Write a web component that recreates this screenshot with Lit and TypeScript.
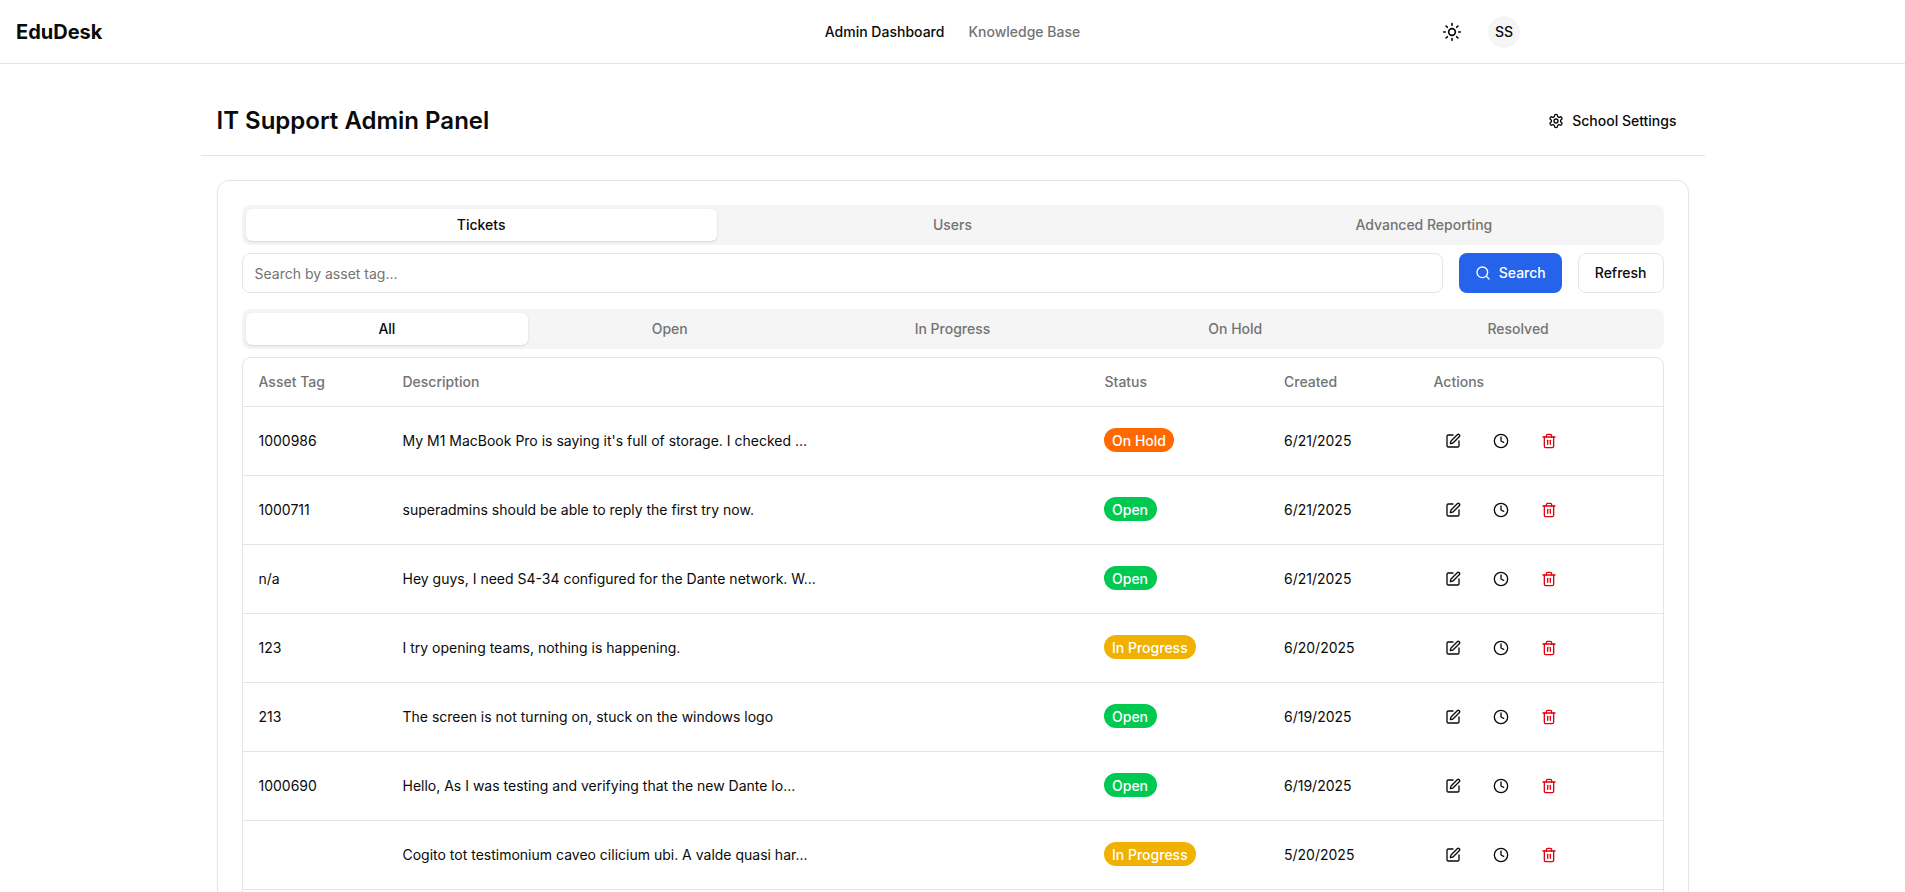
import { LitElement, html, css, svg } from "lit";
import { customElement } from "lit/decorators.js";

const icon = (cls: string, body: unknown) => html`<svg class="icon ${cls}" viewBox="0 0 24 24" fill="none" stroke="currentColor" stroke-width="2" stroke-linecap="round" stroke-linejoin="round">${body}</svg>`;
const sun = svg`<circle cx="12" cy="12" r="4"/><path d="M12 2v2"/><path d="M12 20v2"/><path d="m4.93 4.93 1.41 1.41"/><path d="m17.66 17.66 1.41 1.41"/><path d="M2 12h2"/><path d="M20 12h2"/><path d="m6.34 17.66-1.41 1.41"/><path d="m19.07 4.93-1.41 1.41"/>`;
const gear = svg`<path d="M12.22 2h-.44a2 2 0 0 0-2 2v.18a2 2 0 0 1-1 1.73l-.43.25a2 2 0 0 1-2 0l-.15-.08a2 2 0 0 0-2.73.73l-.22.38a2 2 0 0 0 .73 2.73l.15.1a2 2 0 0 1 1 1.72v.51a2 2 0 0 1-1 1.74l-.15.09a2 2 0 0 0-.73 2.73l.22.38a2 2 0 0 0 2.73.73l.15-.08a2 2 0 0 1 2 0l.43.25a2 2 0 0 1 1 1.73V20a2 2 0 0 0 2 2h.44a2 2 0 0 0 2-2v-.18a2 2 0 0 1 1-1.73l.43-.25a2 2 0 0 1 2 0l.15.08a2 2 0 0 0 2.73-.73l.22-.39a2 2 0 0 0-.73-2.73l-.15-.08a2 2 0 0 1-1-1.74v-.5a2 2 0 0 1 1-1.74l.15-.09a2 2 0 0 0 .73-2.73l-.22-.38a2 2 0 0 0-2.73-.73l-.15.08a2 2 0 0 1-2 0l-.43-.25a2 2 0 0 1-1-1.73V4a2 2 0 0 0-2-2z"/><circle cx="12" cy="12" r="3"/>`;
const search = svg`<circle cx="11" cy="11" r="8"/><path d="m21 21-4.3-4.3"/>`;
const pen = svg`<path d="M12 3H5a2 2 0 0 0-2 2v14a2 2 0 0 0 2 2h14a2 2 0 0 0 2-2v-7"/><path d="M18.375 2.625a1 1 0 0 1 3 3l-9.013 9.014a2 2 0 0 1-.853.505l-2.873.84a.5.5 0 0 1-.62-.62l.84-2.873a2 2 0 0 1 .506-.852z"/>`;
const clock = svg`<circle cx="12" cy="12" r="10"/><polyline points="12 6 12 12 16 14"/>`;
const trash = svg`<path d="M3 6h18"/><path d="M19 6v14c0 1-1 2-2 2H7c-1 0-2-1-2-2V6"/><path d="M8 6V4c0-1 1-2 2-2h4c1 0 2 1 2 2v2"/><line x1="10" x2="10" y1="11" y2="17"/><line x1="14" x2="14" y1="11" y2="17"/>`;

type Row = { tag: string; desc: string; status: string; cls: string; date: string };
const rows: Row[] = [
  { tag: "1000986", desc: "My M1 MacBook Pro is saying it's full of storage. I checked ...", status: "On Hold", cls: "hold", date: "6/21/2025" },
  { tag: "1000711", desc: "superadmins should be able to reply the first try now.", status: "Open", cls: "open", date: "6/21/2025" },
  { tag: "n/a", desc: "Hey guys, I need S4-34 configured for the Dante network. W...", status: "Open", cls: "open", date: "6/21/2025" },
  { tag: "123", desc: "I try opening teams, nothing is happening.", status: "In Progress", cls: "progress", date: "6/20/2025" },
  { tag: "213", desc: "The screen is not turning on, stuck on the windows logo", status: "Open", cls: "open", date: "6/19/2025" },
  { tag: "1000690", desc: "Hello, As I was testing and verifying that the new Dante lo...", status: "Open", cls: "open", date: "6/19/2025" },
  { tag: "", desc: "Cogito tot testimonium caveo cilicium ubi. A valde quasi har...", status: "In Progress", cls: "progress", date: "5/20/2025" },
];

@customElement("app-root")
export class AppRoot extends LitElement {
  static styles = css`
    :host { display: block; height: 892px; overflow: hidden; background: #fff; color: #0a0a0a; font-family: Inter, "Liberation Sans", sans-serif; font-size: 14px; line-height: 20px; }
    * { box-sizing: border-box; }
    .icon { width: 16px; height: 16px; display: block; flex: none; }
    header { height: 64px; border-bottom: 1px solid #e5e5e5; display: grid; grid-template-columns: 1fr auto 1fr; align-items: center; padding: 0 16px; }
    .logo { font-size: 20px; line-height: 28px; font-weight: 700; }
    nav { display: flex; gap: 24px; font-weight: 500; }
    nav .muted { color: #737373; }
    .right { display: flex; justify-content: flex-end; align-items: center; gap: 26.5px; padding-right: 369px; }
    .theme { width: 20px; height: 20px; }
    .avatar { width: 32px; height: 32px; border-radius: 50%; background: #f5f5f5; display: flex; align-items: center; justify-content: center; font-weight: 500; }
    main { width: 1504px; margin: 0 auto; }
    .title { display: flex; justify-content: space-between; align-items: center; height: 92px; padding: 22px 16px 0 16px; border-bottom: 1px solid #e5e5e5; }
    h1 { margin: 0; font-size: 24px; line-height: 32px; font-weight: 600; }
    .settings { display: flex; align-items: center; gap: 8px; height: 40px; padding: 0 12px; font-weight: 500; }
    .card { margin: 24px 16px 0; border: 1px solid #e5e5e5; border-radius: 12px; padding: 24px; box-shadow: 0 1px 2px rgba(0,0,0,.05); }
    .tabs { display: grid; height: 40px; padding: 4px; border-radius: 8px; background: #f5f5f5; color: #737373; font-weight: 500; text-align: center; line-height: 32px; }
    .three { grid-template-columns: repeat(3, 1fr); }
    .five { grid-template-columns: repeat(5, 1fr); }
    .tabs .on { background: #fff; color: #0a0a0a; border-radius: 6px; box-shadow: 0 1px 3px rgba(0,0,0,.1), 0 1px 2px -1px rgba(0,0,0,.1); }
    .search { display: flex; gap: 16px; margin: 8px 0 16px; }
    .field { flex: 1; height: 40px; border: 1px solid #e5e5e5; border-radius: 8px; padding: 10px 12px 8px; color: #737373; }
    .btn { height: 40px; display: flex; align-items: center; justify-content: center; gap: 8px; padding: 0 16px; border-radius: 8px; font-weight: 500; }
    .primary { background: #2563eb; color: #fff; }
    .outline { border: 1px solid #e5e5e5; }
    .table-box { margin-top: 8px; border: 1px solid #e5e5e5; border-radius: 8px; overflow: hidden; }
    table { width: 100%; border-collapse: collapse; table-layout: fixed; }
    th { height: 48px; padding: 0 16px; text-align: left; font-weight: 500; color: #737373; }
    td { height: 69px; padding: 0 16px; }
    tr { border-bottom: 1px solid #e5e5e5; }
    .c1 { width: 144px; } .c2 { width: 702px; } .c3 { width: 179.5px; } .c4 { width: 149.5px; }
    .badge { display: inline-block; margin: -1px 0 0 -1px; padding: 3px 8.5px 1px; height: 24px; border-radius: 999px; color: #fff; font-weight: 500; line-height: 20px; vertical-align: middle; }
    .hold { background: #ff6900; } .open { background: #00c951; } .progress { background: #f0b100; }
    .actions { display: flex; gap: 12px; margin-left: 1px; }
    .act { width: 36px; height: 36px; display: flex; align-items: center; justify-content: center; }
    .danger { color: #e7000b; }
  `;

  render() {
    return html`
      <header>
        <div class="logo">EduDesk</div>
        <nav><span>Admin Dashboard</span><span class="muted">Knowledge Base</span></nav>
        <div class="right">${icon("theme", sun)}<div class="avatar">SS</div></div>
      </header>
      <main>
        <div class="title">
          <h1>IT Support Admin Panel</h1>
          <div class="settings">${icon("", gear)}School Settings</div>
        </div>
        <section class="card">
          <div class="tabs three"><div class="on">Tickets</div><div>Users</div><div>Advanced Reporting</div></div>
          <div class="search">
            <div class="field">Search by asset tag...</div>
            <div class="btn primary">${icon("", search)}Search</div>
            <div class="btn outline">Refresh</div>
          </div>
          <div class="tabs five"><div class="on">All</div><div>Open</div><div>In Progress</div><div>On Hold</div><div>Resolved</div></div>
          <div class="table-box">
            <table>
              <thead><tr>
                <th class="c1">Asset Tag</th><th class="c2">Description</th><th class="c3">Status</th><th class="c4">Created</th><th>Actions</th>
              </tr></thead>
              <tbody>
                ${rows.map((r) => html`<tr>
                  <td>${r.tag}</td>
                  <td>${r.desc}</td>
                  <td><span class="badge ${r.cls}">${r.status}</span></td>
                  <td>${r.date}</td>
                  <td><div class="actions">
                    <div class="act">${icon("", pen)}</div>
                    <div class="act">${icon("", clock)}</div>
                    <div class="act danger">${icon("", trash)}</div>
                  </div></td>
                </tr>`)}
                <tr><td colspan="5"></td></tr>
              </tbody>
            </table>
          </div>
        </section>
      </main>
    `;
  }
}
